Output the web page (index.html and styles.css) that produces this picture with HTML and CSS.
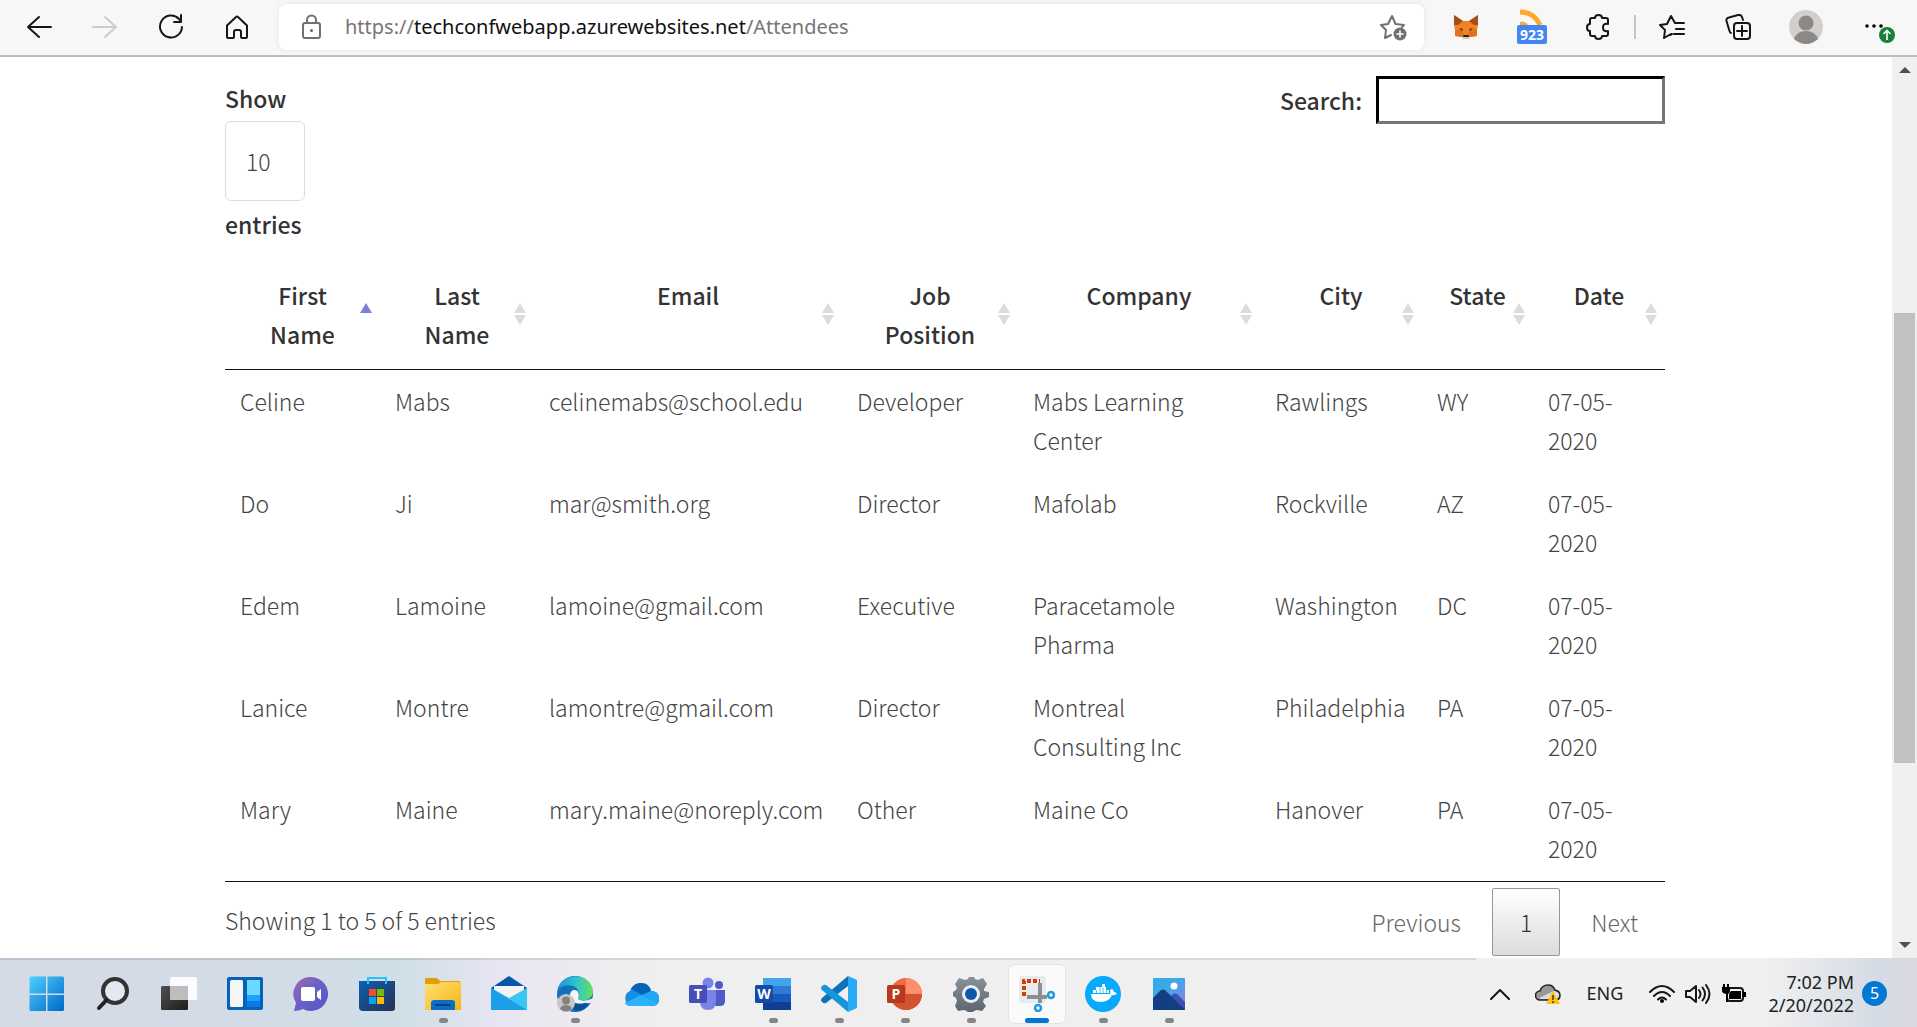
FILE: index.html
```html
<!DOCTYPE html>
<html lang="en">
<head>
<meta charset="utf-8">
<title>Attendees</title>
<link rel="stylesheet" href="styles.css">
</head>
<body>
<header class="toolbar">
  <nav class="nav" aria-label="Browser">
    <button class="tool" aria-label="Back"><svg width="26" height="26" viewBox="0 0 26 26"><path d="M13 3 2 13l11 10M2 13h23" class="ink"/></svg></button>
    <button class="tool" aria-label="Forward"><svg width="26" height="26" viewBox="0 0 26 26"><path d="M13 3l11 10-11 10M24 13H1" class="ink faint"/></svg></button>
    <button class="tool" aria-label="Reload"><svg width="26" height="26" viewBox="0 0 26 26"><path d="M24 13a11 11 0 1 1-3-8l2 2.500M23 1v7h-7" class="ink"/></svg></button>
    <button class="tool" aria-label="Home"><svg width="26" height="26" viewBox="0 0 26 26"><path d="M3 11.500 12 3q1-1 2 0l9 8.500V23q0 1-1 1h-4q-1 0-1-1v-5q0-2-2-2h-3q-2 0-2 2v5q0 1-1 1H4q-1 0-1-1z" class="ink"/></svg></button>
  </nav>
  <div class="address">
    <svg width="26" height="26" viewBox="0 0 26 26"><rect x="4" y="9" width="17" height="15" rx="2" class="ink grey"/><path d="M8 9V6a4.500 4.500 0 0 1 9 0v3" class="ink grey"/><circle cx="12.500" cy="16.500" r="1.500" fill="#666"/></svg>
    <a class="url" href="#"><span>https://</span>techconfwebapp.azurewebsites.net<span>/Attendees</span></a>
    <button class="star" aria-label="Add to favorites"><svg width="28" height="28" viewBox="0 0 28 28"><path d="M11 22l-6 3 1-8-5-5 7-1 4-8 3.500 8 8.500 1-2 2" class="ink grey"/><circle cx="20" cy="21" r="6.500" fill="#6f6f6f"/><path d="M20 17.500v7M16.500 21h7" stroke="#fff" stroke-width="1.500"/></svg></button>
  </div>
  <div class="extras">
    <button class="tool" aria-label="Wallet"><svg width="26" height="26" viewBox="0 0 26 26"><path d="M1 1l9 6h6l9-6 0 10-1 5 0 6-7 1-2 2h-4l-2-2-7-1 0-6-1-5z" fill="#f08326"/><path d="M1 1l9 6-5 4-4 0zM25 1l-9 6 5 4 4 0z" fill="#a34f1d"/><path d="M2 16l7-1 2 7-2 1-7-1zM24 16l-7-1-2 7 2 1 7-1z" fill="#e3701b"/><path d="M6 14l4 1-1 2zM20 14l-4 1 1 2z" fill="#503020"/><path d="M10 22h6l1 2-2 1h-4l-2-1z" fill="#d5c6b8"/><path d="M10.500 21h5l.5 2h-6z" fill="#222"/></svg></button>
    <button class="tool feed" aria-label="Feed, 923 unread"><svg width="26" height="16" viewBox="0 0 26 16"><path d="M1 3Q15 3 21 16" fill="none" stroke="#ffa928" stroke-width="5"/><path d="M1 13q6-1 8 3H1z" fill="#ffa928"/></svg><b class="count">923</b></button>
    <button class="tool" aria-label="Extensions"><svg width="26" height="26" viewBox="0 0 26 26"><path d="M7 4h3q0-3 3.500-3T17 4h4q2 0 2 2v4q-5-1-5 3.500T23 17v3q0 2-2 2h-4q0 3-3.500 3T10 22H7q-2 0-2-2v-3q-3 0-3-3.500T5 10V6q0-2 2-2z" class="ink"/></svg></button>
    <i class="divider"></i>
    <button class="tool" aria-label="Favorites"><svg width="26" height="26" viewBox="0 0 26 26"><path d="M12 20l-7 4 1-8-5-5 7-1 4-8 4 7h9M17 15h8M15 20h10M11 21l2-1" class="ink"/></svg></button>
    <button class="tool" aria-label="Collections"><svg width="26" height="26" viewBox="0 0 26 26"><rect x="9" y="9" width="16" height="16" rx="3" class="ink"/><path d="M17 12v10M12 17h10M6 19q-1 0-1.500-2L1.500 7Q1 4 4 3.500L13 1q3-.500 4 2l1 3" class="ink"/></svg></button>
    <button class="tool profile" aria-label="Profile"><svg width="34" height="34" viewBox="0 0 34 34"><circle cx="17" cy="17" r="17" fill="#d2d0cd"/><circle cx="17" cy="13" r="7.500" fill="#8c8885"/><path d="M5 29q3-8 12-8t12 8q-12 10-24 0z" fill="#8c8885"/></svg></button>
    <button class="tool more" aria-label="Settings and more"><svg width="32" height="36" viewBox="0 0 32 36"><circle cx="3" cy="17" r="1.800"/><circle cx="10" cy="17" r="1.800"/><circle cx="17" cy="17" r="1.800"/><circle cx="23" cy="26" r="8" fill="#188038"/><path d="M23 31v-9M19.500 25l3.500-3.500 3.500 3.500" fill="none" stroke="#fff" stroke-width="1.600"/></svg></button>
  </div>
</header>

<div class="viewport">
  <main class="content">
    <div class="controls">
      <div class="length">
        <label for="length">Show</label>
        <select id="length"><option>10</option><option>25</option><option>50</option></select>
        <label for="length">entries</label>
      </div>
      <div class="filter"><label for="search">Search:</label><input id="search" type="search"></div>
    </div>
    <table class="attendees">
      <colgroup><col class="c-first"><col class="c-last"><col class="c-email"><col class="c-job"><col class="c-company"><col class="c-city"><col class="c-state"><col class="c-date"></colgroup>
      <thead><tr>
        <th class="asc">First Name</th><th>Last Name</th><th>Email</th><th>Job Position</th><th>Company</th><th>City</th><th class="tight">State</th><th>Date</th>
      </tr></thead>
      <tbody>
        <tr><td>Celine</td><td>Mabs</td><td>celinemabs@school.edu</td><td>Developer</td><td class="company">Mabs Learning Center</td><td>Rawlings</td><td>WY</td><td>07-05-2020</td></tr>
        <tr><td>Do</td><td>Ji</td><td>mar@smith.org</td><td>Director</td><td class="company">Mafolab</td><td>Rockville</td><td>AZ</td><td>07-05-2020</td></tr>
        <tr><td>Edem</td><td>Lamoine</td><td>lamoine@gmail.com</td><td>Executive</td><td class="company">Paracetamole Pharma</td><td>Washington</td><td>DC</td><td>07-05-2020</td></tr>
        <tr><td>Lanice</td><td>Montre</td><td>lamontre@gmail.com</td><td>Director</td><td class="company">Montreal Consulting Inc</td><td>Philadelphia</td><td>PA</td><td>07-05-2020</td></tr>
        <tr><td>Mary</td><td>Maine</td><td>mary.maine@noreply.com</td><td>Other</td><td class="company">Maine Co</td><td>Hanover</td><td>PA</td><td>07-05-2020</td></tr>
      </tbody>
    </table>
    <div class="foot">
      <p class="info">Showing 1 to 5 of 5 entries</p>
      <div class="pager"><button class="page">Previous</button><button class="page current">1</button><button class="page">Next</button></div>
    </div>
  </main>
  <div class="scrollbar">
    <svg width="12" height="26" viewBox="0 0 12 26"><path d="M0 16l6-6 6 6z" fill="#505050"/></svg>
    <div class="track"><div class="thumb"></div></div>
    <svg width="12" height="26" viewBox="0 0 12 26"><path d="M0 10l6 6 6-6z" fill="#505050"/></svg>
  </div>
</div>

<footer class="taskbar">
  <svg class="defs" width="0" height="0"><defs>
    <linearGradient id="win" x1="0" y1="0" x2="1" y2="1"><stop stop-color="#4fd0ff"/><stop offset="1" stop-color="#0067c9"/></linearGradient>
    <linearGradient id="dark" x1="0" y1="0" x2="1" y2="1"><stop stop-color="#505050"/><stop offset="1" stop-color="#1d1d1d"/></linearGradient>
    <linearGradient id="chat" x1="0" y1="0" x2="1" y2="1"><stop stop-color="#a167b4"/><stop offset=".5" stop-color="#6461c8"/><stop offset="1" stop-color="#5555c4"/></linearGradient>
    <linearGradient id="store" x1="0" y1="0" x2="1" y2="1"><stop stop-color="#0b61b5"/><stop offset="1" stop-color="#28304f"/></linearGradient>
    <linearGradient id="folder" x1="0" y1="0" x2="1" y2="1"><stop stop-color="#ffe07a"/><stop offset="1" stop-color="#f5b50c"/></linearGradient>
    <linearGradient id="edge" x1="0" y1="0" x2="1" y2="0"><stop stop-color="#1c93d8"/><stop offset=".5" stop-color="#2cc3cf"/><stop offset="1" stop-color="#66e15a"/></linearGradient>
    <linearGradient id="gear" x1="0" y1="0" x2="0" y2="1"><stop stop-color="#899199"/><stop offset="1" stop-color="#5c656e"/></linearGradient>
    <linearGradient id="sky" x1="0" y1="0" x2="1" y2="1"><stop stop-color="#27aee9"/><stop offset=".5" stop-color="#4aa3e8"/><stop offset="1" stop-color="#a175dc"/></linearGradient>
  </defs></svg>
  <nav class="apps" aria-label="Taskbar">
    <button class="app" aria-label="Start"><svg width="36" height="36" viewBox="0 0 36 36"><path d="M.5 2q0-1.500 1.500-1.500h15v17H.5zM18.500.5h15q1.500 0 1.500 1.500v15.500H18.500zM.5 19H17v16H2q-1.500 0-1.500-1.500zM18.500 19H35v14.500q0 1.500-1.500 1.500h-15z" fill="url(#win)"/></svg></button>
    <button class="app" aria-label="Search"><svg width="36" height="36" viewBox="0 0 36 36"><circle cx="20" cy="15" r="12" fill="#e4e9f1" stroke="#333" stroke-width="4"/><path d="M11.500 24 4 32" stroke="#222" stroke-width="4" stroke-linecap="round"/></svg></button>
    <button class="app" aria-label="Task view"><svg width="36" height="36" viewBox="0 0 36 36"><rect y="10" width="27" height="24" rx="1.500" fill="url(#dark)"/><rect x="9" y="1" width="27" height="23" rx="1.500" fill="#fff" opacity=".9"/><path d="M9 10h18v14H9z" fill="#bdbdbd"/></svg></button>
    <button class="app" aria-label="Widgets"><svg width="36" height="36" viewBox="0 0 36 36"><rect y="1" width="36" height="33" rx="2" fill="#0662b8"/><rect x="3" y="4" width="13" height="27" rx="1.500" fill="#f5f5f5"/><path d="M20 4h13v15H20z" fill="#6bd8ff"/><path d="M20 19h13v6H20z" fill="#1ba2ff"/><path d="M20 25h13v6H20z" fill="#087be5"/></svg></button>
    <button class="app" aria-label="Chat"><svg width="36" height="36" viewBox="0 0 36 36"><path d="M18 1a17 17 0 1 1-8 32q-4 2-9 2l2-8A17 17 0 0 1 18 1z" fill="url(#chat)"/><rect x="8" y="11" width="14" height="14" rx="2" fill="#fff"/><path d="M24 16l4-3v11l-4-3z" fill="#fff"/></svg></button>
    <button class="app" aria-label="Store"><svg width="36" height="36" viewBox="0 0 36 36"><path d="M0 5h36v27q0 3-3 3H4q-4 0-4-4z" fill="url(#store)"/><path d="M9 8V2h18v6" fill="none" stroke="#24c4f4" stroke-width="2"/><path d="M10 13h7v7h-7z" fill="#f25022"/><path d="M18 13h7v7h-7z" fill="#7fba00"/><path d="M10 21h7v7h-7z" fill="#00a4ef"/><path d="M18 21h7v7h-7z" fill="#ffb900"/></svg></button>
    <button class="app open" aria-label="File Explorer"><svg width="36" height="36" viewBox="0 0 36 36"><path d="M0 3q0-1 1-1h10q2 0 4 3h20v9H0z" fill="#e0a008"/><path d="M0 8h13l3-2h20v28H0z" fill="url(#folder)"/><path d="M6 34V27q0-3 3-3h18q3 0 3 3v7z" fill="#0a6fc4"/><path d="M11 29h14" stroke="#043f85" stroke-width="2" stroke-linecap="round"/></svg></button>
    <button class="app" aria-label="Mail"><svg width="36" height="36" viewBox="0 0 36 36"><path d="M0 12 18 0l18 12v4H0z" fill="#0757a8"/><path d="M3 10h30v6L18 25 3 16z" fill="#f3f3f3"/><path d="M0 12l18 10 18-10v22H0z" fill="#39c8f4"/><path d="M0 12l36 22H0z" fill="#1d9ee8"/></svg></button>
    <button class="app open" aria-label="Edge"><svg width="36" height="36" viewBox="0 0 36 36"><circle cx="18" cy="18" r="18" fill="#1470bd"/><path d="M1 14C4-5 34-4 36 15c0 8-8 11-14 9-3-1 0-3 0-6 0-9-14-12-21-4z" fill="url(#edge)"/><path d="M13 20c0-7 6-7 8-4 2 4-1 6 1 8q6 2 12-1c-5 6-21 7-21-3z" fill="#f5f5f5"/><path d="M13 21c1 8 12 9 20 5-7 13-22 12-20-5z" fill="#0d4e99"/><path d="M22 24q7 3 14-2v3l-3 2q-6 1-11-3z" fill="#efefef"/><circle cx="9" cy="27" r="9" fill="#c9c7c5"/><circle cx="9" cy="24.500" r="4" fill="#858180"/><path d="M3 33q1-4 6-4t6 4q-6 5-12 0z" fill="#858180"/></svg></button>
    <button class="app" aria-label="OneDrive"><svg width="36" height="36" viewBox="0 0 36 36"><path d="M8 30a8 8 0 0 1-1-15q3-8 11-8 8 0 10 8 8 0 8 8 0 7-7 7z" fill="#168fe0"/><path d="M8 13q3-6 10-6 8 0 10 8l-9 4-7-4z" fill="#0563b5"/><path d="M2 27l17-8 9-4q8 0 8 8 0 7-7 7H8q-4 0-6-3z" fill="#22a5f2"/><path d="M18 19l16 8q-2 3-5 3H8q-4 0-6-3z" fill="#2ab2fa"/></svg></button>
    <button class="app" aria-label="Teams"><svg width="36" height="36" viewBox="0 0 36 36"><circle cx="30" cy="9" r="4" fill="#5059c9"/><path d="M24 14h12v11q0 5-5 5h-7z" fill="#5059c9"/><circle cx="19" cy="7" r="5.500" fill="#7b83eb"/><path d="M11 14h16v11q0 9-8 9t-8-9z" fill="#7b83eb"/><rect y="9" width="18" height="18" rx="1.500" fill="#464eb8"/><text x="9" y="23" class="letter">T</text></svg></button>
    <button class="app open" aria-label="Word"><svg width="36" height="36" viewBox="0 0 36 36"><path d="M8 2h28v8H8z" fill="#41a5ee"/><path d="M8 10h28v8H8z" fill="#2b7cd3"/><path d="M8 18h28v8H8z" fill="#185abd"/><path d="M8 26h28v8H8z" fill="#103f91"/><rect y="9" width="18" height="18" rx="1.500" fill="#124ba8"/><text x="9" y="23" class="letter">W</text></svg></button>
    <button class="app open" aria-label="Visual Studio Code"><svg width="36" height="36" viewBox="0 0 36 36"><path d="M27 0v10L5 27q-2 1-4-1-2-2 0-4z" fill="#0b73b9"/><path d="M1 10q2-2 4-1l22 17v10L1 14q-2-2 0-4z" fill="#1595db"/><path d="M27 0l9 4v28l-9 4z" fill="#2aa9f4"/></svg></button>
    <button class="app open" aria-label="PowerPoint"><svg width="36" height="36" viewBox="0 0 36 36"><circle cx="19" cy="18" r="16" fill="#ed6c47"/><path d="M19 2a16 16 0 0 1 16 16H19z" fill="#ff8f6b"/><path d="M3 18h32a16 16 0 0 1-32 0z" fill="#d35230"/><rect y="9" width="18" height="18" rx="1.500" fill="#b83a1e"/><text x="9" y="23" class="letter">P</text></svg></button>
    <button class="app open" aria-label="Settings"><svg width="36" height="36" viewBox="0 0 36 36"><path d="M6 2l6 2 3-1 1-2h5l1 2 3 1 5-2 4 6-3 5v2l5 1v5l-5 2-1 3 3 4-4 5-5-1-3 1-2 2h-4l-1-2-3-1-6 1-3-5 2-5-1-3-3-2v-4l3-2 1-2-2-4z" fill="url(#gear)"/><circle cx="18" cy="18" r="9" fill="#eee"/><circle cx="18" cy="18" r="6" fill="#0b58ad"/></svg></button>
    <button class="app open active" aria-label="Snipping Tool"><svg width="36" height="36" viewBox="0 0 36 36"><rect width="27" height="27" rx="3" fill="#e8ebee"/><path d="M5 20V5h16" fill="none" stroke="#d83b01" stroke-width="4" stroke-dasharray="4 2"/><path d="M21 7v20M8 21h20" stroke="#8a8f94" stroke-width="4"/><circle cx="32" cy="19" r="3" fill="#fff" stroke="#1d9bdc" stroke-width="2.500"/><circle cx="19" cy="32" r="3" fill="#fff" stroke="#1d9bdc" stroke-width="2.500"/></svg></button>
    <button class="app open" aria-label="Docker"><svg width="36" height="36" viewBox="0 0 36 36"><circle cx="18" cy="18" r="18" fill="#06a9fb"/><path d="M6 18h19q1-2 0-4l2-1q2 1 2 3l3 1q-2 3-5 2-3 7-11 7-10 0-10-8z" fill="#fff"/><path d="M8 14h16v3H8zM11 11h10v3H11zM17 8h3v3h-3z" fill="#fff"/><path d="M11.500 14v3M15 11v6M18 11v6M21.500 14v3" stroke="#06a9fb" stroke-width=".7"/></svg></button>
    <button class="app open" aria-label="Photos"><svg width="36" height="36" viewBox="0 0 36 36"><rect x="2" y="2" width="32" height="32" rx="1" fill="url(#sky)"/><path d="M16 24l6-6q2-1 4 0l8 8v8H18z" fill="#3c4fb5"/><path d="M2 22l8-8q2-1 4 0l20 20H2z" fill="#123f83"/><circle cx="23" cy="10" r="3.500" fill="#fff"/></svg></button>
  </nav>
  <div class="tray">
    <button class="tray-icon" aria-label="Hidden icons"><svg width="20" height="12" viewBox="0 0 20 12"><path d="M1 11l9-9 9 9" class="ink"/></svg></button>
    <button class="tray-icon" aria-label="OneDrive warning"><svg width="26" height="22" viewBox="0 0 26 22"><path d="M5 17a4.500 4.500 0 0 1 0-9Q7 2 13 2q5 0 7 5 5 1 5 5.500T20 17z" fill="#999" stroke="#222" stroke-width="1.500"/><path d="M4 15l15-7q5 1 5 4t-4 4H6z" fill="#ddd"/><path d="M18 8l7 13H11z" fill="#ffc20e"/><path d="M18 12v5M18 18v2" stroke="#222" stroke-width="1.300"/></svg></button>
    <span class="lang">ENG</span>
    <button class="tray-icon snug" aria-label="Wi-Fi"><svg width="26" height="20" viewBox="0 0 26 20"><path d="M1 8Q13-4 25 8M5 12q8-8 16 0M9 15.500q4-4 8 0" class="ink"/><circle cx="13" cy="17" r="2"/></svg></button>
    <button class="tray-icon snug" aria-label="Volume"><svg width="26" height="22" viewBox="0 0 26 22"><path d="M1 8h4l6-5v16l-6-5H1zM14 7q3 4 0 8M17.500 4.500q5 6.500 0 13M21 2q7 9 0 18" class="ink"/></svg></button>
    <button class="tray-icon snug" aria-label="Battery"><svg width="26" height="20" viewBox="0 0 26 20"><path d="M9 4h10q3 0 3 3v7q0 3-3 3H9q-3 0-3-3v-3" class="ink"/><path d="M10 7h10v8H8v-5zM22 8h3v5h-3zM1 3h1V0h2v3h2V0h2v3h1v4q0 2-2 3v8H5v-8Q1 9 1 7z"/></svg></button>
    <div class="clock"><span>7:02 PM</span><span>2/20/2022</span></div>
    <b class="badge">5</b>
  </div>
</footer>
</body>
</html>
```
FILE: styles.css
```css
* { box-sizing: border-box; }
body {
  margin: 0;
  height: 100vh;
  display: flex;
  flex-direction: column;
  background: #fff;
  font-family: "Noto Sans CJK JP", "Noto Sans", sans-serif;
  font-weight: 300;
  color: #444;
}
button { padding: 0; border: 0; background: none; color: inherit; font: inherit; }
svg { display: block; flex: none; }
.ink { fill: none; stroke: #161616; stroke-width: 2; stroke-linejoin: round; stroke-linecap: round; }
.faint { stroke: #ccc; }
.grey { stroke: #707070; }

/* Browser toolbar */
.toolbar {
  flex: none;
  display: flex;
  align-items: center;
  height: 57px;
  padding: 0 12px 2px 6px;
  border-bottom: 2px solid #bdbdbd;
  background: #f7f7f7;
}
.nav, .extras { display: flex; align-items: center; }
.extras { margin-left: 9px; }
.tool { width: 66px; height: 48px; display: flex; align-items: center; justify-content: center; }
.address {
  flex: 1;
  display: flex;
  align-items: center;
  height: 46px;
  margin-left: 9px;
  padding: 0 16px 0 20px;
  border-radius: 8px;
  background: #fff;
  box-shadow: 0 0 6px #e6e6e6;
}
.url { flex: 1; margin-left: 20px; color: #111; font: 400 20px/30px "Noto Sans", sans-serif; text-decoration: none; }
.url span { color: #767676; }
.feed { flex-direction: column; }
.count { width: 30px; border-radius: 2px; background: #4285f4; color: #fff; font: 700 14px/19px "Open Sans", sans-serif; }
.divider { width: 2px; height: 24px; margin: 0 3px; background: #c4c4c4; }
.profile { margin-left: 2px; }
.more { padding-left: 16px; }

/* Page */
.viewport { flex: 1; min-height: 0; display: flex; }
.content { flex: 1; max-width: 1440px; margin: 0 auto; padding-top: 22px; font-size: 23px; line-height: 39px; }
.controls { display: flex; justify-content: space-between; align-items: flex-start; padding-bottom: 17px; }
.controls label { color: #333; font-weight: 500; }
.length { display: flex; flex-direction: column; align-items: flex-start; }
.length select {
  width: 80px;
  height: 80px;
  margin: 3px 0 4px;
  padding: 0 20px;
  appearance: none;
  border: 1px solid #ddd;
  border-radius: 6px;
  background: #fff;
  color: #444;
  font: inherit;
}
.filter { display: flex; align-items: center; gap: 14px; margin-top: -3px; }
.filter input { width: 289px; height: 48px; padding: 0 8px; border: 3px inset #767676; border-color: #212121 #767676 #767676 #212121; font: inherit; }
.attendees { width: 100%; table-layout: fixed; border-collapse: separate; border-spacing: 0; }
.c-first { width: 155px; }
.c-last { width: 154px; }
.c-email { width: 308px; }
.c-job { width: 176px; }
.c-company { width: 242px; }
.c-city { width: 162px; }
.c-state { width: 111px; }
.c-date { width: 132px; }
.attendees th {
  position: relative;
  padding: 15px 27px;
  border-bottom: 1px solid #111;
  font-weight: 500;
  vertical-align: top;
  color: #333;
}
.attendees .tight { padding: 15px 22px; }
.attendees th::before, .attendees th::after {
  content: "";
  position: absolute;
  right: 8px;
  border: 6px solid transparent;
}
.attendees th::before { top: 42px; border-top: 0; border-bottom: 10px solid #dcdcdc; }
.attendees th::after { top: 54px; border-bottom: 0; border-top: 10px solid #dcdcdc; }
.attendees .asc::before { border-bottom-color: #7b80e0; }
.attendees .asc::after { display: none; }
.attendees td { padding: 12px 15px; vertical-align: top; }
.attendees .company { padding-right: 27px; }
.attendees tbody tr:last-child td { padding-bottom: 13px; border-bottom: 1px solid #111; }
.foot { display: flex; justify-content: space-between; padding-top: 6px; }
.info { margin: 13px 0; }
.pager { display: flex; gap: 4px; }
.page { height: 68px; padding: 0 27px; color: #666; }
.current { border: 1px solid #979797; border-radius: 2px; background: linear-gradient(#fff, #dcdcdc); color: #333; }

.scrollbar { flex: none; width: 25px; margin-left: 2px; display: flex; flex-direction: column; align-items: center; background: #f0f0f0; }
.track { flex: 1; width: 21px; display: grid; grid-template-rows: 231fr 451fr 169fr; }
.thumb { grid-row: 2; background: #c1c1c1; }

/* Taskbar */
.taskbar {
  flex: none;
  display: flex;
  justify-content: space-between;
  height: 69px;
  padding: 2px 30px 0 14px;
  background:
    linear-gradient(#0000001a, #0000001a) 0 0 / 77% 2px no-repeat,
    linear-gradient(90deg, #d4dbe7 0, #d3dbe6 12%, #cfdfe7 21%, #e7e5f1 26%, #ebe8f1 28%, #efefef 34%, #f0f0f0 92%, #d5dbe5 98%, #dad9df 100%);
  color: #222;
}
.defs { position: absolute; }
.apps, .tray { display: flex; align-items: center; }
.app {
  width: 58px;
  height: 60px;
  margin: 0 4px;
  padding-top: 11px;
  display: flex;
  flex-direction: column;
  align-items: center;
  gap: 6px;
  border: 1px solid transparent;
  border-radius: 6px;
}
.open::after { content: ""; width: 9px; height: 5px; border-radius: 3px; background: #868686; }
.active { background: #fafafa; border-color: #e3e3e3; }
.active::after { width: 24px; background: #0078d4; }
.letter { fill: #fff; font: 700 14px "Open Sans", sans-serif; text-anchor: middle; }
.tray { font: 400 18px/23px "Noto Sans", sans-serif; }
.tray-icon { width: 48px; display: flex; justify-content: center; }
.snug { width: 36px; }
.lang { width: 66px; text-align: center; }
.lang + .snug { margin-left: 6px; }
.clock { width: 102px; margin-right: 8px; display: flex; flex-direction: column; text-align: right; }
.badge { width: 25px; height: 25px; border-radius: 50%; background: #0078d4; color: #fff; font: 400 16px/25px "Noto Sans", sans-serif; text-align: center; }
```
